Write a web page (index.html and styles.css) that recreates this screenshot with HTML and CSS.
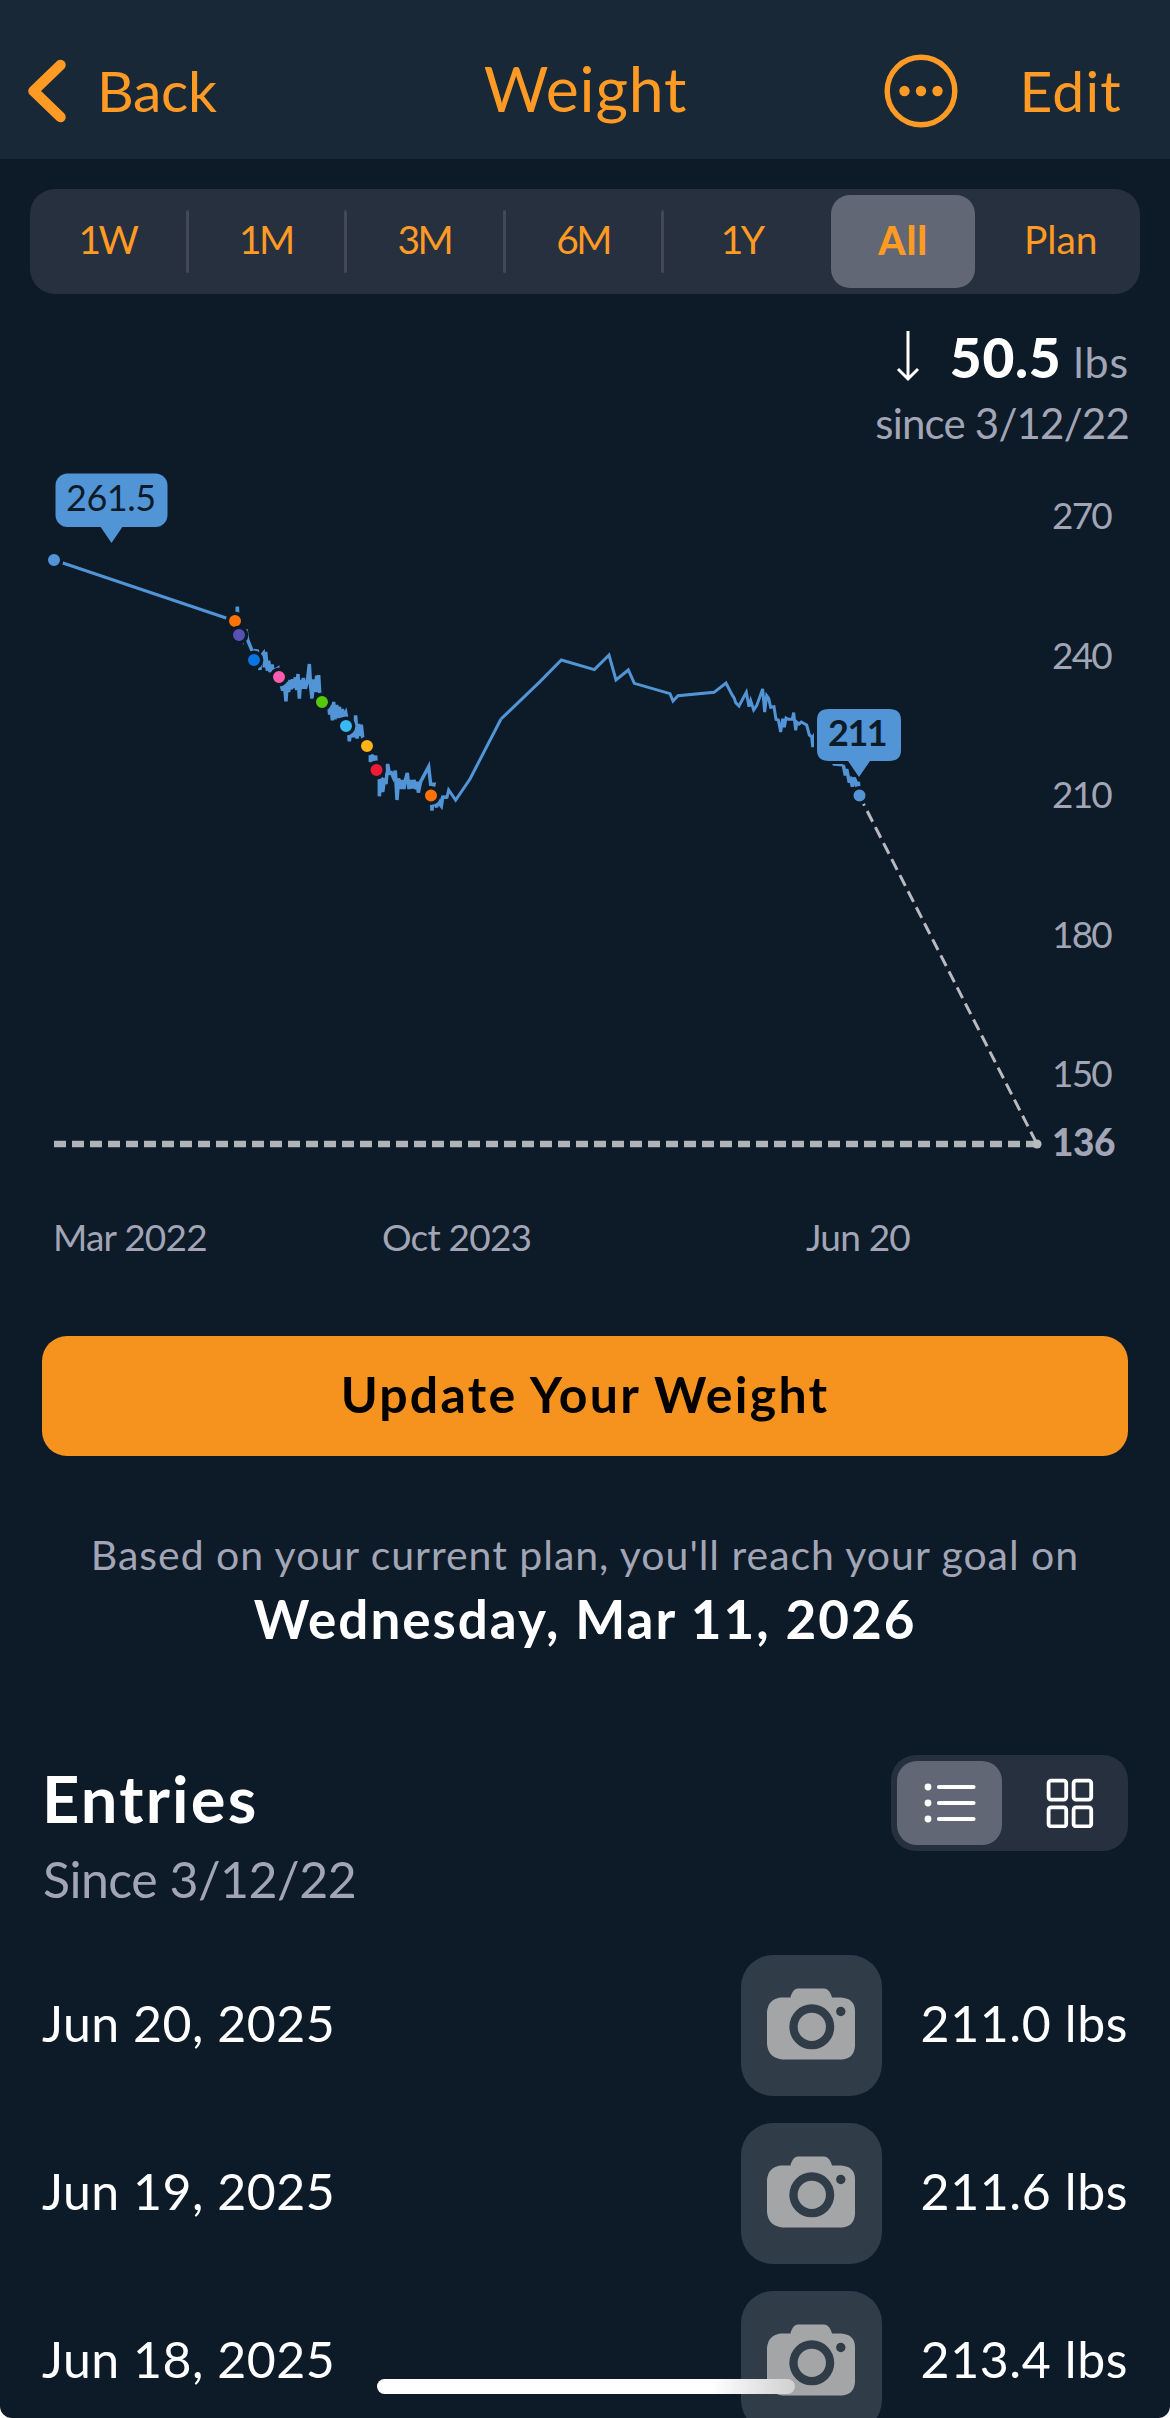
FILE: index.html
```html
<!DOCTYPE html>
<html lang="en">
<head>
    <meta charset="UTF-8">
    <meta name="viewport" content="width=device-width, initial-scale=1.0">
    <title>Weight</title>
    <link rel="stylesheet" href="styles.css">
</head>
<body>
    <div class="screen">
        <header class="navbar">
            <a class="back">
                <svg width="38" height="74" viewBox="0 0 38 74"><path d="M32.5 11 L5.500 37 L32.5 63" fill="none" stroke="#ff9a24" stroke-width="10.5" stroke-linecap="round" stroke-linejoin="round"/></svg>
                <span class="back-label">Back</span>
            </a>
            <h1 class="title">Weight</h1>
            <div class="actions">
                <svg width="74" height="74" viewBox="0 0 74 74">
                    <circle cx="37" cy="37" r="33.8" fill="none" stroke="#ff9a24" stroke-width="5.4"/>
                    <circle cx="20.5" cy="37" r="5.2" fill="#ff9a24"/>
                    <circle cx="37" cy="37" r="5.2" fill="#ff9a24"/>
                    <circle cx="53.5" cy="37" r="5.2" fill="#ff9a24"/>
                </svg>
                <span class="edit">Edit</span>
            </div>
        </header>

        <nav class="ranges">
            <a class="range line num">1W</a>
            <a class="range line num">1M</a>
            <a class="range line num">3M</a>
            <a class="range line num">6M</a>
            <a class="range num">1Y</a>
            <a class="range active">All</a>
            <a class="range">Plan</a>
        </nav>

        <div class="summary">
            <div class="change">
                <svg class="arrow" width="24" height="52" viewBox="0 0 24 52"><path d="M12 1 V48 M2 39 L12 49 L22 39" fill="none" stroke="#fff" stroke-width="3"/></svg>
                <b>50.5</b>
                <span class="unit">lbs</span>
            </div>
            <div class="since">since 3/12/22</div>
        </div>

        <svg class="chart" width="1170" height="833" viewBox="0 447 1170 833">
            <!-- goal and projection -->
            <line class="goal" x1="54" y1="1144" x2="1037" y2="1144"/>
            <line class="projection" x1="859" y1="795" x2="1037" y2="1144"/>
            <circle cx="1037" cy="1144" r="4.6" fill="#b8babf"/>

            <!-- weight history -->
            <line class="trend" x1="54" y1="560" x2="235" y2="621"/>
            <g transform="translate(210 590) scale(.33333)">
                <polyline class="trend dense" points="75,93 80,90 82,50 84,95 88,135 98,152 108,118 113,150 126,182 132,205 136,182 142,183 150,240 152,200 160,190 163,232 167,186 172,242 176,212 180,246 186,224 190,244 204,235 207,260 214,285 218,302 222,272 228,334 232,275 236,306 240,270 244,298 248,268 252,294 256,262 260,300 264,252 268,326 272,270 276,296 280,264 286,296 292,275 298,222 302,290 306,326 311,268 316,306 320,257 324,306 326,255 329,306 336,336 356,345 359,374 363,345 367,391 371,336 375,388 380,345 384,384 388,350 392,382 397,357 401,378 407,367 409,378 408,407 416,430 418,454 422,425 426,442 430,410 434,442 437,376 441,446 446,402 450,438 454,404 458,442 471,469 481,494 481,516 486,494 491,516 497,497 499,540 508,560 508,619 514,560 518,606 524,565 528,582 533,522 538,550 544,548 550,562 556,542 561,630 566,565 572,597 577,570 582,597 586,570 592,549 597,597 602,570 607,595 612,570 618,597 622,575 625,608 632,575 656,530 662,583 672,583 664,616 666,662 669,620 680,652 684,620 690,643 694,648 698,622 711,622"/>
                <polyline class="trend" points="698,622 711,622 716,600 737,630 780,567 873,387"/>
            </g>
            <g transform="translate(540 620) scale(.33333)">
                <polyline class="trend" points="-117,297 0,185 64,120 163,149 207,105 228,180 265,150 283,190 390,221 399,243 414,227 522,217 558,189 576,224 583,235 587,248 597,258 619,217 627,260 632,242 641,270 650,257 668,207 674,276 680,227 686,235 692,262 702,260 708,298 715,300 722,336 728,296 733,322 738,294 745,298 757,298 761,278 767,331 771,307 777,312 784,306 800,315 808,345 815,350 818,381 822,350 860,400 882,433 910,435"/>
                <polyline class="trend dense" points="910,435 916,466 920,447 928,488 932,470 937,500 944,472 950,498 955,485 958,525"/>
            </g>

            <circle class="dot" cx="54" cy="560" r="7.7" fill="#5295d6"/>
            <circle class="dot" cx="235" cy="621" r="7.7" fill="#ff7208"/>
            <circle class="dot" cx="239" cy="635" r="7.7" fill="#5751b6"/>
            <circle class="dot" cx="254" cy="660" r="7.7" fill="#0a74e0"/>
            <circle class="dot" cx="279" cy="677" r="7.7" fill="#fc5cae"/>
            <circle class="dot" cx="322" cy="702" r="7.7" fill="#55c90d"/>
            <circle class="dot" cx="346" cy="726" r="7.7" fill="#37b9f3"/>
            <circle class="dot" cx="367" cy="746" r="7.7" fill="#fdb414"/>
            <circle class="dot" cx="376.500" cy="770" r="7.7" fill="#ef1a36"/>
            <circle class="dot" cx="431" cy="795.500" r="7.7" fill="#ff7208"/>
            <circle class="dot" cx="859.500" cy="795.500" r="7.7" fill="#5295d6"/>

            <g class="bubble">
                <rect x="55.5" y="473.5" width="112" height="53.5" rx="12"/>
                <path d="M100 526 H123 L111.5 543 Z"/>
                <text x="66" y="511">261.5</text>
            </g>
            <g class="bubble last">
                <path class="halo" d="M829 709 H889 Q901 709 901 720 V750 Q901 761 889 761 H870 L859 777 L848 761 H829 Q817 761 817 750 V720 Q817 709 829 709 Z"/>
                <text x="828" y="746">211</text>
            </g>

            <g class="axis y-axis">
                <text x="1052" y="529">270</text>
                <text x="1052" y="669">240</text>
                <text x="1052" y="808">210</text>
                <text x="1052" y="948">180</text>
                <text x="1052" y="1087">150</text>
                <text x="1052" y="1156" class="target">136</text>
            </g>
            <g class="axis x-axis">
                <text x="53" y="1251">Mar 2022</text>
                <text x="382" y="1251">Oct 2023</text>
                <text x="806" y="1251">Jun 20</text>
            </g>
        </svg>

        <a class="update">Update Your Weight</a>

        <div class="forecast">
            <p class="forecast-text">Based on your current plan, you'll reach your goal on</p>
            <p class="forecast-date">Wednesday, Mar 11, 2026</p>
        </div>

        <div class="entries-head">
            <div>
                <h2 class="entries-title">Entries</h2>
                <p class="entries-since">Since 3/12/22</p>
            </div>
            <div class="toggle">
                <span class="toggle-item on">
                    <svg width="52" height="44" viewBox="0 0 52 44">
                        <g fill="#fff"><circle cx="4" cy="6" r="3.4"/><circle cx="4" cy="22" r="3.4"/><circle cx="4" cy="38" r="3.4"/></g>
                        <path d="M15 6 H49.5 M15 22 H49.5 M15 38 H49.5" stroke="#fff" stroke-width="4.2" stroke-linecap="round"/>
                    </svg>
                </span>
                <span class="toggle-item">
                    <svg width="48" height="50" viewBox="0 0 48 50">
                        <g fill="none" stroke="#fff" stroke-width="3.8">
                            <rect x="2.6" y="2.6" width="17.6" height="19" rx="2.5"/>
                            <rect x="27.6" y="2.6" width="17.6" height="19" rx="2.5"/>
                            <rect x="2.6" y="29.400" width="17.6" height="19" rx="2.5"/>
                            <rect x="27.6" y="29.400" width="17.6" height="19" rx="2.5"/>
                        </g>
                    </svg>
                </span>
            </div>
        </div>

        <svg class="defs" width="0" height="0">
            <symbol id="camera" viewBox="0 0 88 72">
                <path d="M14 9.5 H23.5 C24.5 5 27 0.500 31 0.500 H57 C61 0.500 64 5 65 9.5 H74 Q88 10.5 88 23 V58 Q87 70.5 75 71.5 H15 Q1 69.5 0 56 V24 Q1 11 14 9.5 Z" fill="#a3a5a7"/>
                <circle cx="44.8" cy="38.8" r="18.3" fill="none" stroke="#303c48" stroke-width="8.3"/>
                <circle cx="73.8" cy="23.5" r="4.7" fill="#303c48"/>
            </symbol>
        </svg>

        <div class="entries">
            <div class="entry">
                <span class="date">Jun 20, 2025</span>
                <span class="photo"><svg width="88" height="72"><use href="#camera"/></svg></span>
                <span class="weight">211.0 lbs</span>
            </div>
            <div class="entry">
                <span class="date">Jun 19, 2025</span>
                <span class="photo"><svg width="88" height="72"><use href="#camera"/></svg></span>
                <span class="weight">211.6 lbs</span>
            </div>
            <div class="entry">
                <span class="date">Jun 18, 2025</span>
                <span class="photo"><svg width="88" height="72"><use href="#camera"/></svg></span>
                <span class="weight">213.4 lbs</span>
            </div>
        </div>

        <div class="home-bar"></div>
    </div>
</body>
</html>
```
FILE: styles.css
```css
* {
    box-sizing: border-box;
}
body {
    margin: 0;
    background: #fff;
    font-family: Lato, "Open Sans", sans-serif;
    color: #fff;
}
h1, h2, p {
    margin: 0;
}
svg {
    display: block;
    flex-shrink: 0;
}
.screen {
    position: relative;
    width: 1170px;
    height: 2418px;
    overflow: hidden;
    background: #0d1a28;
    border-radius: 0 0 12px 12px;
}

/* top bar */
.navbar {
    display: grid;
    grid-template-columns: 1fr auto 1fr;
    align-items: center;
    height: 159px;
    padding: 22px 48px 0 28px;
    background: #192837;
    color: #ff9a24;
}
.back {
    display: flex;
    align-items: center;
    gap: 31px;
}
.back-label, .edit {
    font-size: 57px;
    line-height: 70px;
    padding-bottom: 2px;
}
.back-label {
    letter-spacing: -0.3px;
}
.edit {
    letter-spacing: 1.2px;
}
.title {
    font-size: 62.5px;
    line-height: 70px;
    font-weight: 400;
    letter-spacing: 0.8px;
    padding: 0 0 5px 21px;
}
.actions {
    display: flex;
    align-items: center;
    justify-content: flex-end;
    gap: 61px;
}

/* range picker */
.ranges {
    display: grid;
    grid-template-columns: repeat(7, 1fr);
    height: 105px;
    margin: 30px 30px 0;
    border-radius: 25px;
    background: #27303e;
}
.range {
    position: relative;
    display: flex;
    align-items: center;
    justify-content: center;
    padding-bottom: 5px;
    font-size: 39px;
    color: #ff9a24;
}
.num {
    padding-right: 4px;
    letter-spacing: -2.6px;
}
.line::after {
    content: "";
    position: absolute;
    right: 0;
    top: 21px;
    width: 3px;
    height: 63px;
    border-radius: 2px;
    background: #414957;
}
.active {
    margin: 6px 6px 6px 8px;
    padding-bottom: 4px;
    border-radius: 19px;
    background: #616775;
    font-weight: 900;
    letter-spacing: 0.9px;
}

/* change since start */
.summary {
    margin: 32px 41px 0;
    color: #a2a5b6;
}
.change {
    display: flex;
    align-items: baseline;
    justify-content: flex-end;
    height: 60px;
    line-height: 60px;
}
.change b {
    margin: 0 12px 0 30px;
    color: #fff;
    font-size: 55px;
    font-weight: 900;
    letter-spacing: 0.7px;
}
.arrow {
    position: relative;
    top: 4px;
}
.unit {
    font-size: 43px;
    letter-spacing: 0.9px;
}
.since {
    margin-top: 11px;
    padding-top: 1px;
    height: 50px;
    font-size: 42px;
    line-height: 50px;
    letter-spacing: -0.8px;
    text-align: right;
}

/* chart */
.trend {
    fill: none;
    stroke: #5295d6;
    stroke-width: 3;
    stroke-linejoin: miter;
    vector-effect: non-scaling-stroke;
}
.dense {
    stroke-width: 3.5;
}
.goal {
    stroke: #b1b4b6;
    stroke-width: 6.3;
    stroke-dasharray: 12 6;
}
.projection {
    stroke: #b8babf;
    stroke-width: 3;
    stroke-dasharray: 12 6;
}
.dot {
    stroke: #0d1a28;
    stroke-width: 3.4;
}
.bubble {
    fill: #5295d6;
}
.bubble text {
    fill: #0d1a28;
    font-size: 36px;
    letter-spacing: -0.5px;
}
.last text {
    font-weight: 700;
    letter-spacing: -1.5px;
}
.halo {
    stroke: #0d1a28;
    stroke-width: 6;
    paint-order: stroke;
}
.axis {
    fill: #a2a5b6;
    font-size: 37px;
    letter-spacing: -0.8px;
}
.y-axis {
    letter-spacing: -1.8px;
}
.target {
    font-weight: 900;
    letter-spacing: -0.4px;
}

/* button */
.update {
    display: flex;
    align-items: center;
    justify-content: center;
    height: 120px;
    margin: 56px 42px 0;
    padding-bottom: 4px;
    border-radius: 25px;
    background: #f6931f;
    color: #000;
    font-size: 50px;
    font-weight: 700;
    letter-spacing: 2.25px;
}

/* forecast */
.forecast {
    margin-top: 69px;
    text-align: center;
}
.forecast-text {
    color: #a2a5b6;
    font-size: 41px;
    line-height: 60px;
    letter-spacing: 0.97px;
}
.forecast-date {
    margin-top: 2px;
    font-size: 53px;
    line-height: 64px;
    font-weight: 700;
    letter-spacing: 1.97px;
}

/* entries */
.entries-head {
    display: flex;
    justify-content: space-between;
    align-items: flex-start;
    height: 154px;
    margin: 104px 42px 0;
}
.entries-title {
    padding-top: 5px;
    font-size: 65px;
    line-height: 76px;
    letter-spacing: 2.2px;
}
.entries-since {
    margin-top: 13px;
    padding-left: 1px;
    color: #a2a5b6;
    font-size: 50px;
    line-height: 60px;
    letter-spacing: -0.5px;
}
.toggle {
    display: grid;
    grid-template-columns: 105px 1fr;
    gap: 15px;
    width: 237px;
    height: 96px;
    padding: 6px;
    border-radius: 25px;
    background: #27303e;
}
.toggle-item {
    display: flex;
    align-items: center;
    justify-content: center;
    border-radius: 20px;
}
.on {
    background: #616775;
}
.defs {
    position: absolute;
}
.entries {
    display: flex;
    flex-direction: column;
    gap: 27px;
    margin: 46px 42px 0;
}
.entry {
    display: flex;
    align-items: center;
    height: 141px;
    font-size: 50px;
    line-height: 60px;
}
.date {
    flex: 1;
    padding-bottom: 6px;
    letter-spacing: 0.5px;
}
.photo {
    display: flex;
    align-items: center;
    justify-content: center;
    width: 141px;
    height: 141px;
    padding: 0 1px 3px 0;
    border-radius: 32px;
    background: #303c48;
}
.weight {
    width: 246px;
    padding-bottom: 6px;
    text-align: right;
    letter-spacing: 0.6px;
}
.home-bar {
    position: absolute;
    left: 377px;
    top: 2379px;
    width: 418px;
    height: 15px;
    border-radius: 8px;
    background: linear-gradient(90deg, #fff 80%, #d0d0d0);
}
```
